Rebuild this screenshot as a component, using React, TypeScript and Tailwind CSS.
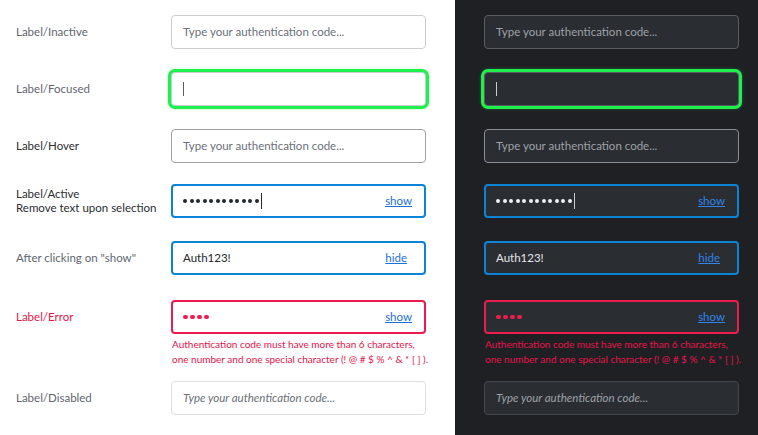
import React from "react";

type Variant = "inactive" | "focused" | "hover" | "active" | "shown" | "error" | "disabled";

const ROWS: { variant: Variant; label: React.ReactNode; labelClass: string; mt: string }[] = [
  { variant: "inactive", label: "Label/Inactive", labelClass: "text-[#5f6670]", mt: "mt-[15px]" },
  { variant: "focused", label: "Label/Focused", labelClass: "text-[#5f6670]", mt: "mt-[23px]" },
  { variant: "hover", label: "Label/Hover", labelClass: "text-[#2b2e33]", mt: "mt-[23px]" },
  {
    variant: "active",
    label: (
      <>
        Label/Active
        <br />
        Remove text upon selection
      </>
    ),
    labelClass: "text-[#2b2e33]",
    mt: "mt-[21px]",
  },
  { variant: "shown", label: 'After clicking on "show"', labelClass: "text-[#5f6670]", mt: "mt-[23px]" },
  { variant: "error", label: "Label/Error", labelClass: "text-[#e5154a]", mt: "mt-[25px]" },
  { variant: "disabled", label: "Label/Disabled", labelClass: "text-[#5f6670]", mt: "mt-[14px]" },
];

const PLACEHOLDER = "Type your authentication code...";

function Field({ variant, dark }: { variant: Variant; dark: boolean }) {
  const base = "h-[34px] w-[255px] rounded-[4px] flex items-center px-[11px] text-[11.5px]";
  const bg = dark ? "bg-[#2a2d32]" : "bg-white";
  let border = dark ? "border border-[#585c63]" : "border border-[#c9ccd1]";
  if (variant === "hover") border = dark ? "border border-[#8a8e95]" : "border border-[#9da1a7]";
  if (variant === "disabled") border = dark ? "border border-[#44484e]" : "border border-[#dcdee2]";
  if (variant === "active" || variant === "shown") border = "border-2 border-[#0b84d8]";
  if (variant === "error") border = "border-2 border-[#ec1c4f]";
  const ring = variant === "focused" ? "ring-[3px] ring-[#1ef04c] shadow-[0_0_4px_2px_rgba(30,240,76,0.45)]" : "";
  const ph = dark ? "text-[#9ea2a8]" : "text-[#6b7079]";
  const txt = dark ? "text-[#e4e6e9]" : "text-[#24272b]";
  const link = dark ? "text-[#2f86e6]" : "text-[#1a6fd9]";
  const dots = (n: number, cls: string, size: string, gap: string) => (
    <span className={`flex items-center ${gap} ${cls}`}>
      {Array.from({ length: n }).map((_, i) => (
        <span key={i} className={`${size} rounded-full bg-current`} />
      ))}
    </span>
  );

  return (
    <div className={`${base} ${bg} ${border} ${ring}`}>
      {(variant === "inactive" || variant === "hover") && <span className={ph}>{PLACEHOLDER}</span>}
      {variant === "disabled" && <span className={`${ph} italic`}>{PLACEHOLDER}</span>}
      {variant === "focused" && <span className={`w-px h-[14px] ${dark ? "bg-[#c9ccd0]" : "bg-[#5a5f66]"}`} />}
      {variant === "active" && (
        <>
          <div className="flex items-center flex-1 -ml-px">
            {dots(12, dark ? "text-[#eef0f2]" : "text-[#24272b]", "w-[4px] h-[4px]", "gap-[2.5px]")}
            <span className={`w-px h-[16px] ml-[2px] ${dark ? "bg-[#c9ccd0]" : "bg-[#24272b]"}`} />
          </div>
          <span className={`${link} underline text-[11.5px] mr-[1px]`}>show</span>
        </>
      )}
      {variant === "shown" && (
        <>
          <span className={`${txt} flex-1 -ml-px`}>Auth123!</span>
          <span className={`${link} underline text-[11.5px] mr-[6px]`}>hide</span>
        </>
      )}
      {variant === "error" && (
        <>
          <div className="flex-1 -ml-px">{dots(4, "text-[#ec1c4f]", "w-[4.5px] h-[4.5px]", "gap-[2.5px]")}</div>
          <span className={`${link} underline text-[11.5px] mr-[1px]`}>show</span>
        </>
      )}
    </div>
  );
}

function ErrorText() {
  return (
    <p className="mt-[3px] h-[30px] text-[10px] leading-[15px] text-[#e5154a] pl-[1px]">
      Authentication code must have more than 6 characters,
      <br />
      one number and one special character (! @ # $ % ^ &amp; * [ ] ).
    </p>
  );
}

export default function App() {
  return (
    <div className="flex w-[758px] h-[435px] font-['Lato','Liberation_Sans',sans-serif] overflow-hidden">
      <div className="w-[455px] bg-white flex flex-col">
        {ROWS.map((r) => (
          <div key={r.variant} className={r.mt}>
            <div className="flex items-center">
              <div className={`w-[171px] pl-[16px] text-[11.5px] leading-[14px] ${r.labelClass}`}>{r.label}</div>
              <Field variant={r.variant} dark={false} />
            </div>
            {r.variant === "error" && (
              <div className="pl-[171px]">
                <ErrorText />
              </div>
            )}
          </div>
        ))}
      </div>
      <div className="flex-1 bg-[#1f2024] flex flex-col pl-[29px]">
        {ROWS.map((r) => (
          <div key={r.variant} className={r.mt}>
            <div className="flex items-center">
              <Field variant={r.variant} dark={true} />
            </div>
            {r.variant === "error" && <ErrorText />}
          </div>
        ))}
      </div>
    </div>
  );
}
